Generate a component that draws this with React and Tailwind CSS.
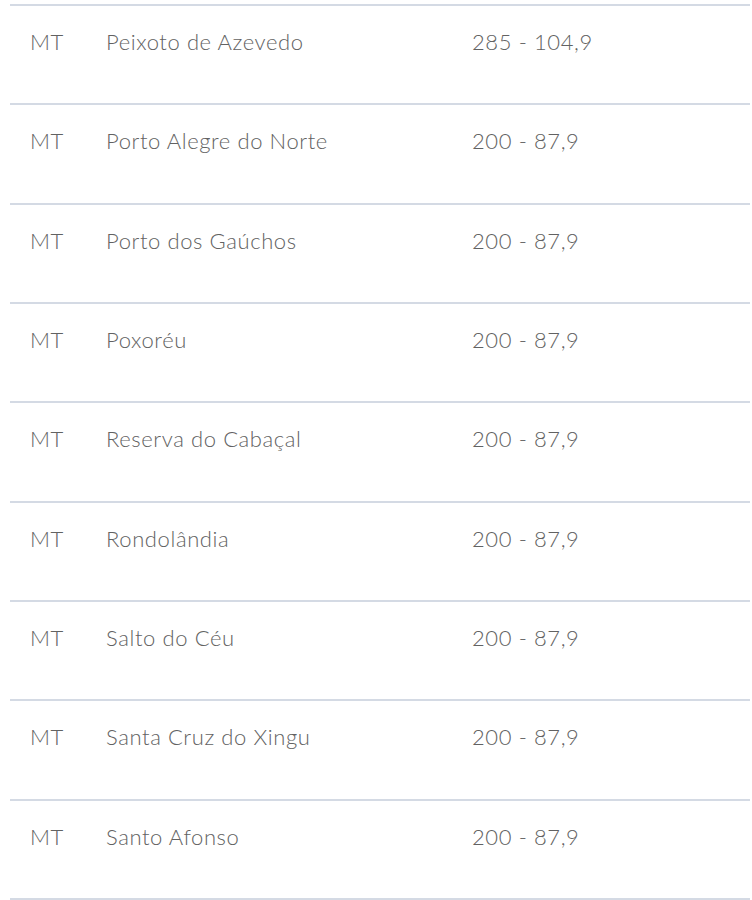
import React from "react";

const rows = [
  ["MT", "Peixoto de Azevedo", "285 - 104,9"],
  ["MT", "Porto Alegre do Norte", "200 - 87,9"],
  ["MT", "Porto dos Gaúchos", "200 - 87,9"],
  ["MT", "Poxoréu", "200 - 87,9"],
  ["MT", "Reserva do Cabaçal", "200 - 87,9"],
  ["MT", "Rondolândia", "200 - 87,9"],
  ["MT", "Salto do Céu", "200 - 87,9"],
  ["MT", "Santa Cruz do Xingu", "200 - 87,9"],
  ["MT", "Santo Afonso", "200 - 87,9"],
];

const App = () => {
  return (
    <div className="w-[752px] h-[900px] bg-white overflow-hidden pt-[4px] pl-[10px] pr-[2px]">
      <div className="border-t-2 border-[#d4dae4] font-['Lato',sans-serif] font-light text-[22px] tracking-[0.6px] text-[#626262]">
        {rows.map(([uf, city, value], i) => (
          <div
            key={i}
            className="flex h-[99.33px] border-b-2 border-[#d4dae4] pt-[20px] leading-[32px]"
          >
            <div className="w-[96px] pl-[20px]">{uf}</div>
            <div className="w-[366px]">{city}</div>
            <div className="flex-1">{value}</div>
          </div>
        ))}
      </div>
    </div>
  );
};

export default App;
